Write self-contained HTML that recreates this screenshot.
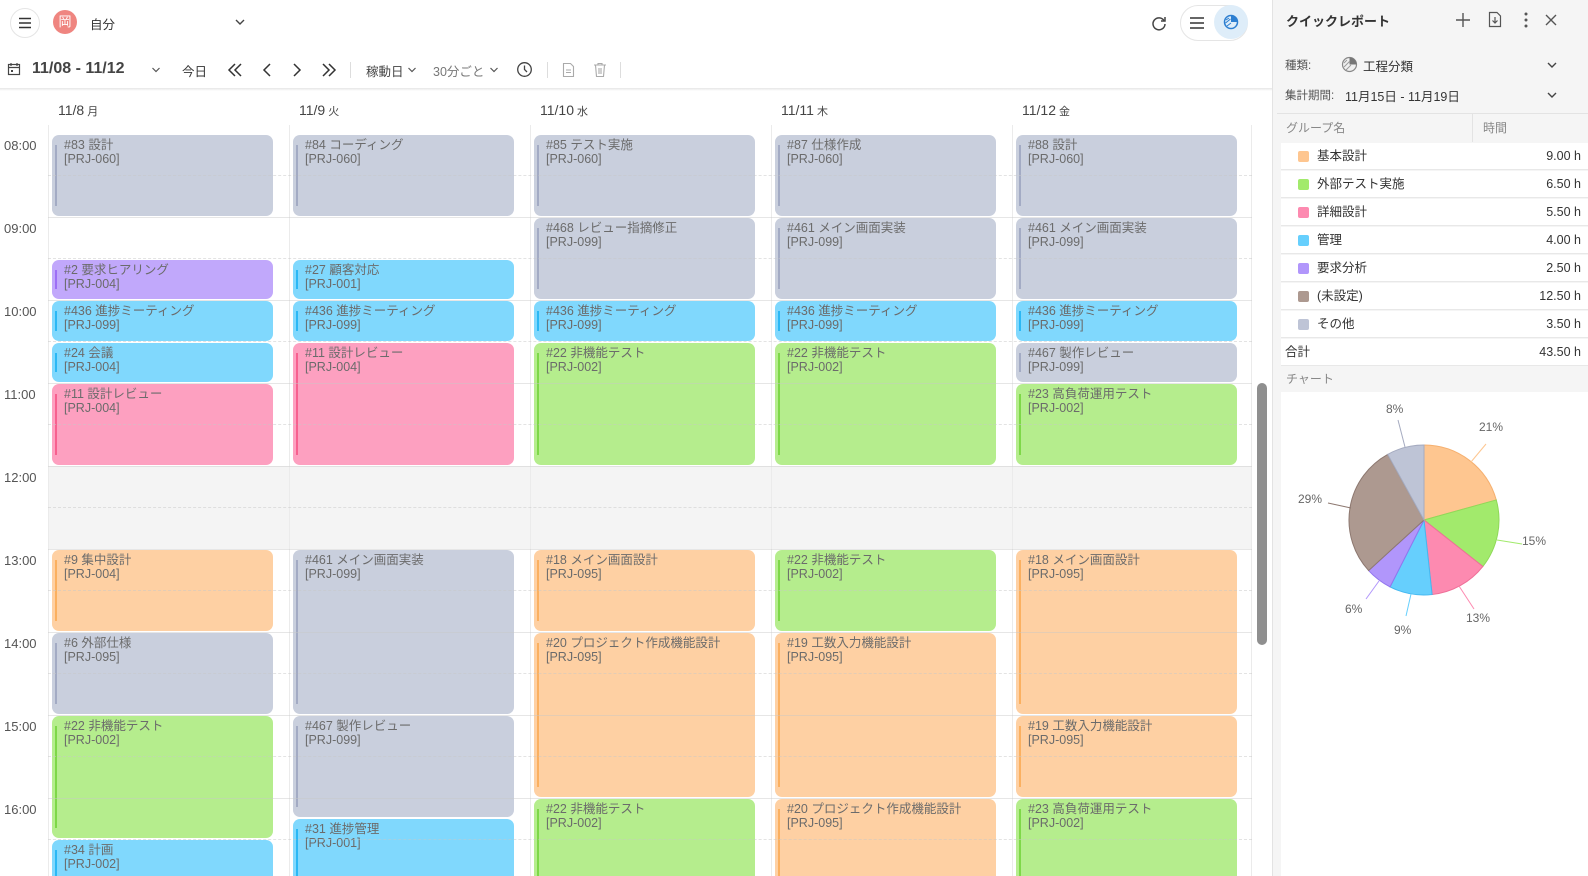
<!DOCTYPE html>
<html><head><meta charset="utf-8">
<style>
*{box-sizing:border-box;margin:0;padding:0}
html,body{width:1588px;height:876px;overflow:hidden}
body{background:#fff;font-family:"Liberation Sans","Noto Sans CJK JP",sans-serif;color:#333}
#w{position:relative;width:1588px;height:876px;overflow:hidden}
.a{position:absolute}
.ev{position:absolute;width:221px;border-radius:7px;padding:3px 0 0 12px;font-size:12.5px;line-height:14px;color:#6b6b6b;overflow:hidden;white-space:nowrap}
.ev::before{content:"";position:absolute;left:3px;top:10px;bottom:10px;width:2px;background:var(--c)}
.cut{border-radius:7px 7px 0 0}.cut::before{bottom:0}
.g{background:#c9cfdd;--c:#a3abc4}.p{background:#c1a8fb;--c:#9d6ff5}.b{background:#80d8fd;--c:#2bb8f5}
.k{background:#fda0c0;--c:#f7608f}.o{background:#fed0a3;--c:#fbb060}.n{background:#b5ed8d;--c:#7ed848}
.hl{position:absolute;left:48px;width:1204px;height:1px;background:rgba(200,200,200,.45);z-index:3}
.dl{position:absolute;left:48px;width:1204px;border-top:1px dashed rgba(200,200,200,.5);z-index:3}
.vl{position:absolute;top:125px;height:751px;width:1px;background:#ebebeb}
.tm{position:absolute;left:4px;font-size:13px;color:#555}
.dh{position:absolute;top:102px;font-size:14px;color:#444}
.dh small{font-size:11px;margin-left:3px}
.rp{position:absolute;left:1272px;top:0;width:316px;height:876px;background:#f5f5f5;border-left:1px solid #e3e3e3}
.row{position:absolute;left:8px;width:308px;height:27px;background:#fff;border-bottom:1px solid #e8e8e8;font-size:12.5px;color:#333;line-height:26px}
.row i{position:absolute;left:17px;top:8px;width:11px;height:11px;border-radius:2px}
.row span{position:absolute;left:36px;top:0}
.row b{position:absolute;right:8px;top:0;font-weight:normal}
</style></head><body><div id="w">

<div class="a" style="left:10px;top:8px;width:30px;height:30px;border:1px solid #e5e5e5;border-radius:50%"></div>
<svg class="a" style="left:17px;top:15px" width="16" height="16"><path d="M2 3.5h12M2 8h12M2 12.5h12" stroke="#333" stroke-width="1.6"/></svg>
<div class="a" style="left:53px;top:10px;width:24px;height:24px;border-radius:50%;background:#ef8580;color:#fff;font-size:13px;text-align:center;line-height:24px">岡</div>
<div class="a" style="left:90px;top:14px;font-size:12.5px">自分</div>
<svg class="a" style="left:234px;top:17px" width="12" height="10"><path d="M2 3l4 4 4-4" stroke="#444" stroke-width="1.4" fill="none"/></svg>

<svg class="a" style="left:1150px;top:14px" width="18" height="18"><path d="M14 6.5A6 6 0 1 0 15 10" stroke="#444" stroke-width="1.5" fill="none"/><path d="M15 3v4h-4" stroke="#444" stroke-width="1.5" fill="none"/></svg>
<div class="a" style="left:1180px;top:5px;width:68px;height:36px;border:1px solid #e5e5e5;border-radius:18px"></div>
<svg class="a" style="left:1188px;top:15px" width="18" height="16"><path d="M2 3h14M2 8h14M2 13h14" stroke="#333" stroke-width="1.6"/></svg>
<div class="a" style="left:1214px;top:5px;width:34px;height:34px;border-radius:50%;background:#deedf9"></div>
<svg class="a" style="left:1222px;top:13px" width="18" height="18"><circle cx="9" cy="9" r="6.5" fill="none" stroke="#2d7fd1" stroke-width="1.5"/><path d="M9 9V2.5A6.5 6.5 0 0 1 15.5 9z" fill="#2d7fd1"/><path d="M4 7l3 -2M3.5 10l5-4M5 13l4-3" stroke="#2d7fd1" stroke-width="1"/></svg>

<svg class="a" style="left:7px;top:62px" width="14" height="14"><rect x="1.5" y="2.5" width="11" height="10" fill="none" stroke="#444" stroke-width="1.2"/><path d="M1.5 5.5h11M4 1v3M10 1v3" stroke="#444" stroke-width="1.2"/><rect x="4" y="8" width="2" height="2" fill="#444"/></svg>
<div class="a" style="left:32px;top:60px;font-size:16px;font-weight:bold;color:#444">11/08 - 11/12</div>
<svg class="a" style="left:151px;top:66px" width="10" height="8"><path d="M1.5 2l3.5 3.5 3.5-3.5" stroke="#555" stroke-width="1.2" fill="none"/></svg>
<div class="a" style="left:182px;top:61px;font-size:12.5px">今日</div>
<svg class="a" style="left:226px;top:61px" width="18" height="18"><path d="M9 3L3 9l6 6M15 3L9 9l6 6" stroke="#333" stroke-width="1.5" fill="none"/></svg>
<svg class="a" style="left:260px;top:61px" width="14" height="18"><path d="M10 3L4 9l6 6" stroke="#333" stroke-width="1.5" fill="none"/></svg>
<svg class="a" style="left:290px;top:61px" width="14" height="18"><path d="M4 3l6 6-6 6" stroke="#333" stroke-width="1.5" fill="none"/></svg>
<svg class="a" style="left:320px;top:61px" width="18" height="18"><path d="M3 3l6 6-6 6M9 3l6 6-6 6" stroke="#333" stroke-width="1.5" fill="none"/></svg>
<div class="a" style="left:350px;top:62px;width:1px;height:16px;background:#ddd"></div>
<div class="a" style="left:366px;top:61px;font-size:12.5px;color:#444">稼動日</div>
<svg class="a" style="left:407px;top:66px" width="10" height="8"><path d="M1.5 2l3.5 3.5 3.5-3.5" stroke="#555" stroke-width="1.2" fill="none"/></svg>
<div class="a" style="left:433px;top:61px;font-size:12.5px;color:#777">30分ごと</div>
<svg class="a" style="left:489px;top:66px" width="10" height="8"><path d="M1.5 2l3.5 3.5 3.5-3.5" stroke="#555" stroke-width="1.2" fill="none"/></svg>
<svg class="a" style="left:516px;top:61px" width="17" height="17"><circle cx="8.5" cy="8.5" r="6.8" fill="none" stroke="#444" stroke-width="1.3"/><path d="M8.5 4.5v4l2.5 2.5" stroke="#444" stroke-width="1.3" fill="none"/></svg>
<div class="a" style="left:547px;top:62px;width:1px;height:16px;background:#ddd"></div>
<svg class="a" style="left:562px;top:62px" width="13" height="16"><path d="M1.5 1.5h7l3 3v10h-10z" fill="none" stroke="#aaa" stroke-width="1.1"/><path d="M4 8h5M4 10.5h5" stroke="#aaa"/></svg>
<svg class="a" style="left:593px;top:62px" width="14" height="16"><path d="M1 3h12M5 3V1.5h4V3M2.5 3l1 11.5h7l1-11.5M6 6v6M8 6v6" fill="none" stroke="#aaa" stroke-width="1.1"/></svg>
<div class="a" style="left:620px;top:62px;width:1px;height:16px;background:#ddd"></div>
<div class="a" style="left:0;top:88px;width:1272px;height:3px;background:linear-gradient(#e6e6e6,#fff)"></div>

<div class="dh" style="left:58px">11/8<small>月</small></div>
<div class="dh" style="left:299px">11/9<small>火</small></div>
<div class="dh" style="left:540px">11/10<small>水</small></div>
<div class="dh" style="left:781px">11/11<small>木</small></div>
<div class="dh" style="left:1022px">11/12<small>金</small></div>

<div class="a" style="left:48px;top:466px;width:1204px;height:83px;background:#f4f4f4"></div>
<div class="vl" style="left:48px"></div><div class="vl" style="left:289px"></div><div class="vl" style="left:530px"></div><div class="vl" style="left:771px"></div><div class="vl" style="left:1012px"></div><div class="vl" style="left:1251px"></div>
<div class="hl" style="top:217px"></div><div class="hl" style="top:300px"></div><div class="hl" style="top:383px"></div><div class="hl" style="top:466px"></div><div class="hl" style="top:549px"></div><div class="hl" style="top:632px"></div><div class="hl" style="top:715px"></div><div class="hl" style="top:798px"></div>
<div class="dl" style="top:175px"></div><div class="dl" style="top:258px"></div><div class="dl" style="top:341px"></div><div class="dl" style="top:424px"></div><div class="dl" style="top:507px"></div><div class="dl" style="top:590px"></div><div class="dl" style="top:673px"></div><div class="dl" style="top:756px"></div><div class="dl" style="top:839px"></div>
<div class="tm" style="top:138px">08:00</div><div class="tm" style="top:221px">09:00</div><div class="tm" style="top:304px">10:00</div><div class="tm" style="top:387px">11:00</div><div class="tm" style="top:470px">12:00</div><div class="tm" style="top:553px">13:00</div><div class="tm" style="top:636px">14:00</div><div class="tm" style="top:719px">15:00</div><div class="tm" style="top:802px">16:00</div>

<div class="ev g" style="left:52px;top:135px;height:81px">#83 設計<br>[PRJ-060]</div>
<div class="ev p" style="left:52px;top:260px;height:39px">#2 要求ヒアリング<br>[PRJ-004]</div>
<div class="ev b" style="left:52px;top:301px;height:40px">#436 進捗ミーティング<br>[PRJ-099]</div>
<div class="ev b" style="left:52px;top:343px;height:39px">#24 会議<br>[PRJ-004]</div>
<div class="ev k" style="left:52px;top:384px;height:81px">#11 設計レビュー<br>[PRJ-004]</div>
<div class="ev o" style="left:52px;top:550px;height:81px">#9 集中設計<br>[PRJ-004]</div>
<div class="ev g" style="left:52px;top:633px;height:81px">#6 外部仕様<br>[PRJ-095]</div>
<div class="ev n" style="left:52px;top:716px;height:122px">#22 非機能テスト<br>[PRJ-002]</div>
<div class="ev b cut" style="left:52px;top:840px;height:36px">#34 計画<br>[PRJ-002]</div>

<div class="ev g" style="left:293px;top:135px;height:81px">#84 コーディング<br>[PRJ-060]</div>
<div class="ev b" style="left:293px;top:260px;height:39px">#27 顧客対応<br>[PRJ-001]</div>
<div class="ev b" style="left:293px;top:301px;height:40px">#436 進捗ミーティング<br>[PRJ-099]</div>
<div class="ev k" style="left:293px;top:343px;height:122px">#11 設計レビュー<br>[PRJ-004]</div>
<div class="ev g" style="left:293px;top:550px;height:164px">#461 メイン画面実装<br>[PRJ-099]</div>
<div class="ev g" style="left:293px;top:716px;height:101px">#467 製作レビュー<br>[PRJ-099]</div>
<div class="ev b cut" style="left:293px;top:819px;height:57px">#31 進捗管理<br>[PRJ-001]</div>

<div class="ev g" style="left:534px;top:135px;height:81px">#85 テスト実施<br>[PRJ-060]</div>
<div class="ev g" style="left:534px;top:218px;height:81px">#468 レビュー指摘修正<br>[PRJ-099]</div>
<div class="ev b" style="left:534px;top:301px;height:40px">#436 進捗ミーティング<br>[PRJ-099]</div>
<div class="ev n" style="left:534px;top:343px;height:122px">#22 非機能テスト<br>[PRJ-002]</div>
<div class="ev o" style="left:534px;top:550px;height:81px">#18 メイン画面設計<br>[PRJ-095]</div>
<div class="ev o" style="left:534px;top:633px;height:164px">#20 プロジェクト作成機能設計<br>[PRJ-095]</div>
<div class="ev n cut" style="left:534px;top:799px;height:77px">#22 非機能テスト<br>[PRJ-002]</div>

<div class="ev g" style="left:775px;top:135px;height:81px">#87 仕様作成<br>[PRJ-060]</div>
<div class="ev g" style="left:775px;top:218px;height:81px">#461 メイン画面実装<br>[PRJ-099]</div>
<div class="ev b" style="left:775px;top:301px;height:40px">#436 進捗ミーティング<br>[PRJ-099]</div>
<div class="ev n" style="left:775px;top:343px;height:122px">#22 非機能テスト<br>[PRJ-002]</div>
<div class="ev n" style="left:775px;top:550px;height:81px">#22 非機能テスト<br>[PRJ-002]</div>
<div class="ev o" style="left:775px;top:633px;height:164px">#19 工数入力機能設計<br>[PRJ-095]</div>
<div class="ev o cut" style="left:775px;top:799px;height:77px">#20 プロジェクト作成機能設計<br>[PRJ-095]</div>

<div class="ev g" style="left:1016px;top:135px;height:81px">#88 設計<br>[PRJ-060]</div>
<div class="ev g" style="left:1016px;top:218px;height:81px">#461 メイン画面実装<br>[PRJ-099]</div>
<div class="ev b" style="left:1016px;top:301px;height:40px">#436 進捗ミーティング<br>[PRJ-099]</div>
<div class="ev g" style="left:1016px;top:343px;height:39px">#467 製作レビュー<br>[PRJ-099]</div>
<div class="ev n" style="left:1016px;top:384px;height:81px">#23 高負荷運用テスト<br>[PRJ-002]</div>
<div class="ev o" style="left:1016px;top:550px;height:164px">#18 メイン画面設計<br>[PRJ-095]</div>
<div class="ev o" style="left:1016px;top:716px;height:81px">#19 工数入力機能設計<br>[PRJ-095]</div>
<div class="ev n cut" style="left:1016px;top:799px;height:77px">#23 高負荷運用テスト<br>[PRJ-002]</div>

<div class="a" style="left:1257px;top:383px;width:10px;height:262px;border-radius:5px;background:#8f8f8f"></div>

<div class="rp">
 <div class="a" style="left:13px;top:11px;font-size:13px;font-weight:bold;color:#333">クイックレポート</div>
 <svg class="a" style="left:182px;top:12px" width="16" height="16"><path d="M8 1v14M1 8h14" stroke="#555" stroke-width="1.4"/></svg>
 <svg class="a" style="left:215px;top:11px" width="14" height="17"><path d="M1.5 1.5h7.5l3.5 3.5v10.5h-11z" fill="none" stroke="#555" stroke-width="1.2"/><path d="M7 6v6M4.5 9.5L7 12l2.5-2.5" stroke="#555" stroke-width="1.2" fill="none"/></svg>
 <svg class="a" style="left:250px;top:12px" width="6" height="16"><circle cx="3" cy="2" r="1.5" fill="#555"/><circle cx="3" cy="8" r="1.5" fill="#555"/><circle cx="3" cy="14" r="1.5" fill="#555"/></svg>
 <svg class="a" style="left:271px;top:13px" width="14" height="14"><path d="M2 2l10 10M12 2L2 12" stroke="#555" stroke-width="1.4"/></svg>
 <div class="a" style="left:12px;top:57px;font-size:11.5px;color:#555">種類:</div>
 <svg class="a" style="left:68px;top:56px" width="17" height="17"><circle cx="8.5" cy="8.5" r="7" fill="#f0f0f0" stroke="#888" stroke-width="1.2"/><path d="M8.5 8.5V1.5A7 7 0 0 1 15.5 8.5z" fill="#777"/><path d="M3 7l3-3M3 11l6-6M5 14l5-5" stroke="#999" stroke-width=".9"/></svg>
 <div class="a" style="left:90px;top:56px;font-size:12.5px;color:#333">工程分類</div>
 <svg class="a" style="left:273px;top:60px" width="12" height="10"><path d="M2 3l4 4 4-4" stroke="#444" stroke-width="1.4" fill="none"/></svg>
 <div class="a" style="left:12px;top:87px;font-size:11.5px;color:#555">集計期間:</div>
 <div class="a" style="left:72px;top:86px;font-size:12.5px;color:#333">11月15日 - 11月19日</div>
 <svg class="a" style="left:273px;top:90px" width="12" height="10"><path d="M2 3l4 4 4-4" stroke="#444" stroke-width="1.4" fill="none"/></svg>
 <div class="a" style="left:4px;top:113px;width:312px;height:1px;background:#e3e3e3"></div>
 <div class="a" style="left:199px;top:114px;width:1px;height:28px;background:#e3e3e3"></div>
 <div class="a" style="left:13px;top:119px;font-size:12px;color:#888">グループ名</div>
 <div class="a" style="left:210px;top:119px;font-size:12px;color:#888">時間</div>
 <div class="row" style="top:143px"><i style="background:#fec690"></i><span>基本設計</span><b>9.00 h</b></div>
 <div class="row" style="top:171px"><i style="background:#a2ea6c"></i><span>外部テスト実施</span><b>6.50 h</b></div>
 <div class="row" style="top:199px"><i style="background:#fd8ab0"></i><span>詳細設計</span><b>5.50 h</b></div>
 <div class="row" style="top:227px"><i style="background:#66cffd"></i><span>管理</span><b>4.00 h</b></div>
 <div class="row" style="top:255px"><i style="background:#b196fb"></i><span>要求分析</span><b>2.50 h</b></div>
 <div class="row" style="top:283px"><i style="background:#ad9990"></i><span>(未設定)</span><b>12.50 h</b></div>
 <div class="row" style="top:311px"><i style="background:#bec4d6"></i><span>その他</span><b>3.50 h</b></div>
 <div class="row" style="top:339px"><span style="left:4px">合計</span><b>43.50 h</b></div>
 <div class="a" style="left:13px;top:370px;font-size:12px;color:#888">チャート</div>
 <div class="a" style="left:8px;top:392px;width:308px;height:484px;background:#fff"></div>
</div>

<svg class="a" style="left:1272px;top:392px" width="316" height="484">
<g transform="translate(152,128)" stroke-width="1">
<path d="M0 0L0 -75A75 75 0 0 1 72.26 -20.07Z" fill="#fec690" stroke="#f5b070"/>
<path d="M0 0L72.26 -20.07A75 75 0 0 1 58.86 46.48Z" fill="#a2ea6c" stroke="#8fd958"/>
<path d="M0 0L58.86 46.48A75 75 0 0 1 8.11 74.56Z" fill="#fd8ab0" stroke="#ef6f98"/>
<path d="M0 0L8.11 74.56A75 75 0 0 1 -33.93 66.88Z" fill="#66cffd" stroke="#45b8f0"/>
<path d="M0 0L-33.93 66.88A75 75 0 0 1 -55.39 50.57Z" fill="#b196fb" stroke="#9275ee"/>
<path d="M0 0L-55.39 50.57A75 75 0 0 1 -36.32 -65.62Z" fill="#ad9990" stroke="#8d7870"/>
<path d="M0 0L-36.32 -65.62A75 75 0 0 1 0 -75Z" fill="#bec4d6" stroke="#a5abc0"/>
<path d="M47 -58L62 -76" stroke="#fec690" fill="none"/>
<path d="M73 20L98 24" stroke="#a2ea6c" fill="none"/>
<path d="M35 66L50 89" stroke="#fd8ab0" fill="none"/>
<path d="M-13 74L-18 96" stroke="#66cffd" fill="none"/>
<path d="M-45 61L-58 79" stroke="#b196fb" fill="none"/>
<path d="M-73 -12L-96 -17" stroke="#8d7870" fill="none"/>
<path d="M-19 -73L-26 -100" stroke="#a5abc0" fill="none"/>
</g>
<g font-size="12" fill="#666" font-family="Liberation Sans,sans-serif">
<text x="207" y="39">21%</text>
<text x="250" y="153">15%</text>
<text x="194" y="230">13%</text>
<text x="122" y="242">9%</text>
<text x="73" y="221">6%</text>
<text x="26" y="111">29%</text>
<text x="114" y="21">8%</text>
</g>
</svg>
</div></body></html>
